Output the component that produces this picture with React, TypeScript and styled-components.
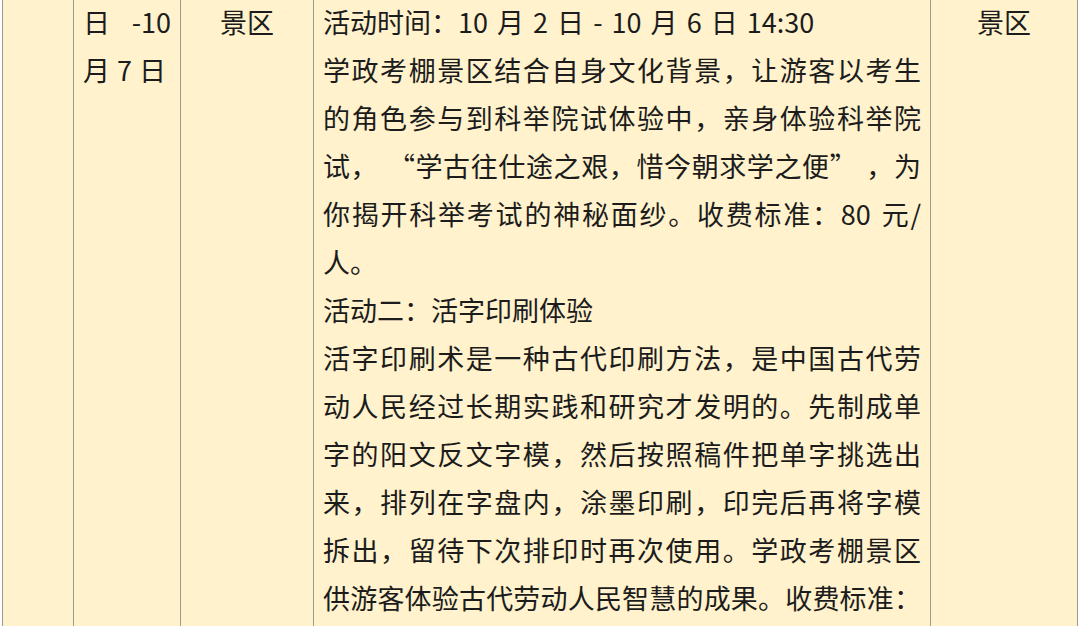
import React from "react";
import styled, { createGlobalStyle } from "styled-components";

const GlobalStyle = createGlobalStyle`
    html, body {
        margin: 0;
        padding: 0;
        background: #ffffff;
        overflow: hidden;
    }
    body {
        font-family: "Noto Sans CJK SC", "Noto Sans", sans-serif;
    }
`;

const Page = styled.div`
    width: 1080px;
    height: 626px;
    overflow: hidden;
    padding-left: 2px;
    box-sizing: border-box;
`;

const Table = styled.table`
    margin-top: -2px;
    border-collapse: collapse;
    table-layout: fixed;
    width: 1075px;
    height: 640px;
    background: #fff2cc;
    color: #1c1c1c;
    font-size: 27px;
    line-height: 48px;
`;

const Cell = styled.td<{ $align?: "left" | "center"; $dark?: boolean }>`
    vertical-align: top;
    padding: 0 9px;
    border-left: 1.5px solid ${(p) => (p.$dark ? "#3a3a3a" : "#9a9a92")};
    border-right: 1.5px solid #9a9a92;
    text-align: ${(p) => p.$align ?? "left"};
    white-space: nowrap;
    word-spacing: ${(p) => (p.$dark ? "3px" : "1px")};
`;

const Line = styled.div`
    text-align: justify;
    text-align-last: justify;
`;

const LastLine = styled.div`
    text-align: left;
`;

const App = () => {
    return (
        <>
            <GlobalStyle />
            <Page>
                <Table>
                    <colgroup>
                        <col style={{ width: 71 }} />
                        <col style={{ width: 107 }} />
                        <col style={{ width: 133 }} />
                        <col style={{ width: 617 }} />
                        <col style={{ width: 147 }} />
                    </colgroup>
                    <tbody>
                        <tr>
                            <Cell />
                            <Cell>
                                <Line>日&nbsp; -10</Line>
                                <LastLine>月 7 日</LastLine>
                            </Cell>
                            <Cell $align="center">景区</Cell>
                            <Cell $dark>
                                <LastLine>活动时间：10 月 2 日 - 10 月 6 日 14:30</LastLine>
                                <Line>学政考棚景区结合自身文化背景，让游客以考生</Line>
                                <Line>的角色参与到科举院试体验中，亲身体验科举院</Line>
                                <Line>试， “学古往仕途之艰，惜今朝求学之便” ，为</Line>
                                <Line>你揭开科举考试的神秘面纱。收费标准：80 元/</Line>
                                <LastLine>人。</LastLine>
                                <LastLine>活动二：活字印刷体验</LastLine>
                                <Line>活字印刷术是一种古代印刷方法，是中国古代劳</Line>
                                <Line>动人民经过长期实践和研究才发明的。先制成单</Line>
                                <Line>字的阳文反文字模，然后按照稿件把单字挑选出</Line>
                                <Line>来，排列在字盘内，涂墨印刷，印完后再将字模</Line>
                                <Line>拆出，留待下次排印时再次使用。学政考棚景区</Line>
                                <Line>供游客体验古代劳动人民智慧的成果。收费标准：</Line>
                            </Cell>
                            <Cell $align="center">景区</Cell>
                        </tr>
                    </tbody>
                </Table>
            </Page>
        </>
    );
};

export default App;
